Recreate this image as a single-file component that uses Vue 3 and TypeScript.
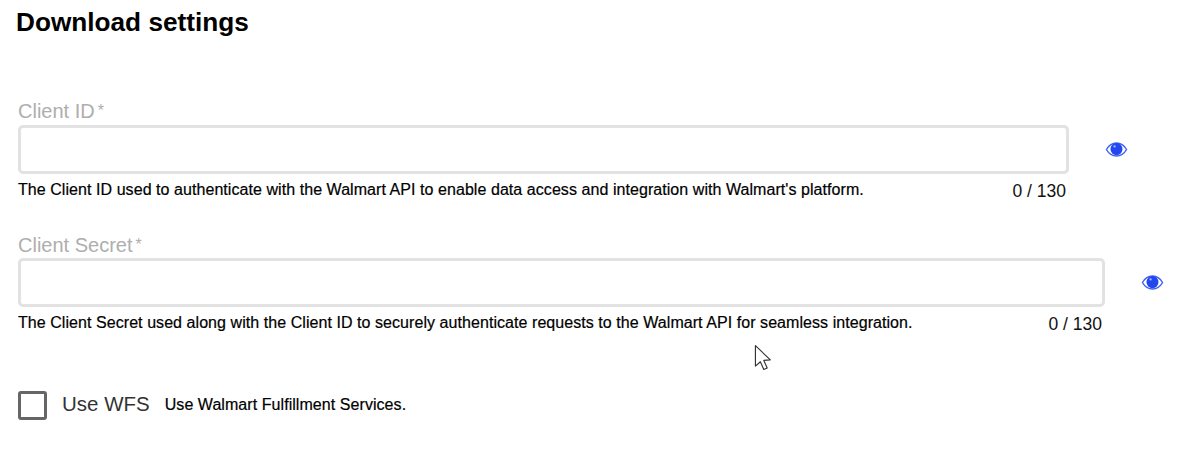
<script setup lang="ts">
interface Field {
  label: string
  hint: string
  modifier: string
}
const fields: Field[] = [
  {
    label: 'Client ID',
    hint: "The Client ID used to authenticate with the Walmart API to enable data access and integration with Walmart's platform.",
    modifier: 'field-a',
  },
  {
    label: 'Client Secret',
    hint: 'The Client Secret used along with the Client ID to securely authenticate requests to the Walmart API for seamless integration.',
    modifier: 'field-b',
  },
]
</script>

<template>
  <main class="page">
    <h1 class="title">Download settings</h1>
    <section v-for="f in fields" :key="f.label" class="field" :class="f.modifier">
      <div class="label">{{ f.label }}<span class="req">*</span></div>
      <div class="row">
        <div class="input"></div>
        <svg class="eye" viewBox="0 0 24 24" aria-hidden="true">
          <path fill="none" stroke="#3f62f0" stroke-width="1.5" d="M1.5 12C4 7.6 7.7 5.2 12 5.2s8 2.4 10.5 6.8c-2.5 4.4-6.2 6.8-10.5 6.8S4 16.4 1.5 12z" />
          <circle cx="12" cy="11.6" r="6.3" fill="#2347ee" />
          <circle cx="10" cy="8.8" r="1.2" fill="#a9b8f8" />
        </svg>
      </div>
      <div class="meta">
        <span class="hint">{{ f.hint }}</span>
        <span class="count">0 / 130</span>
      </div>
    </section>
    <div class="check">
      <span class="box"></span>
      <span class="check-label">Use WFS</span>
      <span class="check-hint">Use Walmart Fulfillment Services.</span>
    </div>
    <svg class="cursor" viewBox="0 0 20 30" aria-hidden="true">
      <path fill="#fff" stroke="#333" stroke-width="1.2" stroke-linejoin="round" d="M1.5 1.5V23l5.2-4.6 3.6 8.2 3.6-1.6-3.6-8 6.9-.6z" />
    </svg>
  </main>
</template>

<style>
html, body { margin: 0; background: #fff; }
</style>

<style scoped>
.page {
  position: relative;
  width: 1181px;
  height: 451px;
  box-sizing: border-box;
  padding: 7px 0 0 18px;
  overflow: hidden;
  font-family: "Liberation Sans", Arial, sans-serif;
  color: #000;
}
.title {
  margin: 0 0 0 -2px;
  font-size: 26.2px;
  line-height: 30px;
  font-weight: 700;
  color: #000;
}
.field-a { margin-top: 62px; }
.field-b { margin-top: 33px; }
.label {
  font-size: 20px;
  line-height: 24px;
  color: #aeaeae;
}
.req {
  font-size: 16px;
  margin-left: 3px;
  vertical-align: 2px;
}
.row {
  display: flex;
  align-items: center;
  margin-top: 2px;
}
.field-b .row { margin-top: 1px; }
.input {
  height: 49px;
  box-sizing: border-box;
  border: 3px solid #e2e2e2;
  border-radius: 5px;
  background: #fff;
}
.field-a .input { width: 1051px; }
.field-b .input { width: 1087px; }
.eye {
  width: 23px;
  height: 23px;
  margin-left: 36px;
  flex: none;
}
.meta {
  display: flex;
  align-items: flex-start;
  justify-content: space-between;
  margin-top: 7px;
}
.field-a .meta { width: 1048px; }
.field-b .meta { width: 1084px; }
.hint {
  font-size: 16px;
  letter-spacing: 0.06px;
  line-height: 18px;
  color: #000;
  -webkit-text-stroke: 0.2px #000;
}
.count {
  margin-top: 1px;
  font-size: 17.5px;
  line-height: 18px;
  color: #111;
}
.check {
  display: flex;
  align-items: center;
  margin-top: 58px;
}
.box {
  width: 29px;
  height: 29px;
  box-sizing: border-box;
  border: 3px solid #666;
  border-radius: 3px;
  flex: none;
}
.check-label {
  margin-left: 15px;
  margin-bottom: 3px;
  font-size: 20.5px;
  color: #333;
}
.check-hint {
  margin-left: 15px;
  margin-bottom: 2px;
  font-size: 16px;
  letter-spacing: 0.06px;
  color: #000;
  -webkit-text-stroke: 0.2px #000;
}
.cursor {
  position: absolute;
  left: 754px;
  top: 344px;
  width: 19px;
  height: 29px;
}
</style>
